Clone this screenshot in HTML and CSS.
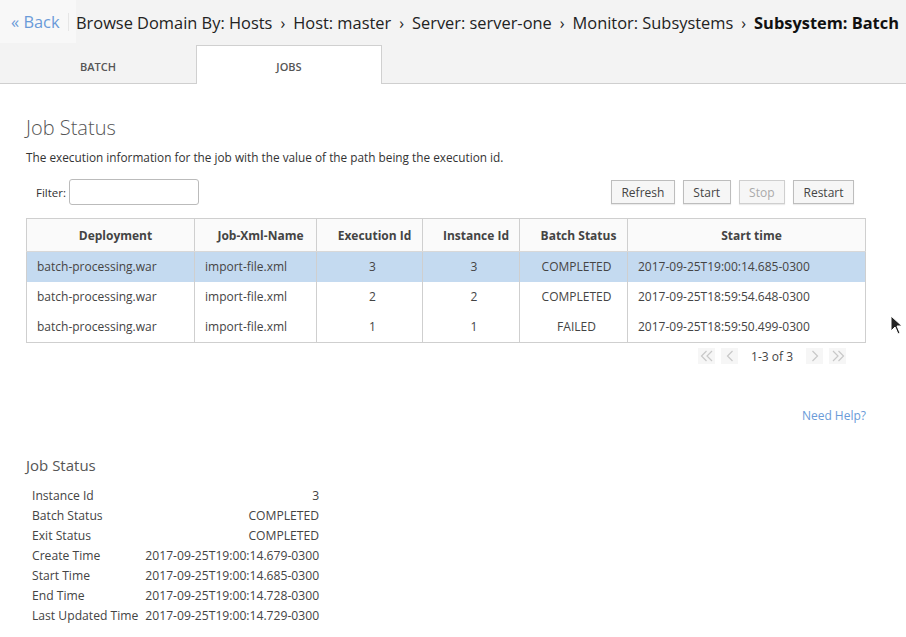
FILE: index.html
```html
<!DOCTYPE html>
<html>
<head>
<meta charset="utf-8">
<link rel="stylesheet" href="styles.css">
</head>
<body>
<div class="topbar">
  <div class="crumbs">
    <div class="back-box"><a class="back">« Back</a></div>
    <span class="crumb">Browse Domain By: Hosts</span>
    <span class="sep">›</span>
    <span class="crumb">Host: master</span>
    <span class="sep">›</span>
    <span class="crumb">Server: server-one</span>
    <span class="sep">›</span>
    <span class="crumb">Monitor: Subsystems</span>
    <span class="sep">›</span>
    <span class="crumb strong">Subsystem: Batch</span>
  </div>
  <div class="tabs">
    <div class="tab">BATCH</div>
    <div class="tab active">JOBS</div>
  </div>
</div>
<div class="content">
  <h1 class="title">Job Status</h1>
  <p class="desc">The execution information for the job with the value of the path being the execution id.</p>
  <div class="toolbar">
    <label class="filter">Filter: <input type="text" class="filter-input"></label>
    <div class="buttons">
      <button class="btn">Refresh</button>
      <button class="btn">Start</button>
      <button class="btn disabled">Stop</button>
      <button class="btn">Restart</button>
    </div>
  </div>
  <table class="grid">
    <thead>
      <tr>
        <th class="c1">Deployment</th>
        <th class="c2">Job-Xml-Name</th>
        <th class="c3">Execution Id</th>
        <th class="c4">Instance Id</th>
        <th class="c5">Batch Status</th>
        <th class="c6">Start time</th>
      </tr>
    </thead>
    <tbody>
      <tr class="selected">
        <td>batch-processing.war</td><td>import-file.xml</td><td class="ctr">3</td><td class="ctr">3</td><td class="ctr">COMPLETED</td><td>2017-09-25T19:00:14.685-0300</td>
      </tr>
      <tr>
        <td>batch-processing.war</td><td>import-file.xml</td><td class="ctr">2</td><td class="ctr">2</td><td class="ctr">COMPLETED</td><td>2017-09-25T18:59:54.648-0300</td>
      </tr>
      <tr>
        <td>batch-processing.war</td><td>import-file.xml</td><td class="ctr">1</td><td class="ctr">1</td><td class="ctr">FAILED</td><td>2017-09-25T18:59:50.499-0300</td>
      </tr>
    </tbody>
  </table>
  <div class="pager">
    <span class="pg"><svg width="14" height="14" viewBox="0 0 14 14"><path d="M6.5 2 L1.5 7 L6.5 12 M12 2 L7 7 L12 12" fill="none" stroke="#c8c8c8" stroke-width="1.2"/></svg></span>
    <span class="pg"><svg width="14" height="14" viewBox="0 0 14 14"><path d="M9.5 2 L4.5 7 L9.5 12" fill="none" stroke="#c8c8c8" stroke-width="1.2"/></svg></span>
    <span class="pg-text">1-3 of 3</span>
    <span class="pg"><svg width="14" height="14" viewBox="0 0 14 14"><path d="M4.5 2 L9.5 7 L4.5 12" fill="none" stroke="#c8c8c8" stroke-width="1.2"/></svg></span>
    <span class="pg"><svg width="14" height="14" viewBox="0 0 14 14"><path d="M2 2 L7 7 L2 12 M7.5 2 L12.5 7 L7.5 12" fill="none" stroke="#c8c8c8" stroke-width="1.2"/></svg></span>
  </div>
  <div class="help-row"><a class="help">Need Help?</a></div>
  <h2 class="subtitle">Job Status</h2>
  <table class="details">
    <tr><td>Instance Id</td><td class="val">3</td></tr>
    <tr><td>Batch Status</td><td class="val">COMPLETED</td></tr>
    <tr><td>Exit Status</td><td class="val">COMPLETED</td></tr>
    <tr><td>Create Time</td><td class="val">2017-09-25T19:00:14.679-0300</td></tr>
    <tr><td>Start Time</td><td class="val">2017-09-25T19:00:14.685-0300</td></tr>
    <tr><td>End Time</td><td class="val">2017-09-25T19:00:14.728-0300</td></tr>
    <tr><td>Last Updated Time</td><td class="val">2017-09-25T19:00:14.729-0300</td></tr>
  </table>
</div>
<svg class="cursor" width="14" height="22" viewBox="0 0 14 22"><path d="M1 1 L1 16 L5 12 L8 19 L10 18 L7 11 L12 11 Z" fill="#222" stroke="#fff" stroke-width="1"/></svg>
</body>
</html>
```
FILE: styles.css
```css
* { box-sizing: border-box; }
html, body { margin: 0; padding: 0; background: #fff; }
body {
  font-family: "Open Sans", "Liberation Sans", sans-serif;
  color: #333;
  width: 906px;
  height: 637px;
  overflow: hidden;
  position: relative;
}
.topbar {
  background: #f3f3f3;
  border-bottom: 1px solid #cfcfcf;
}
.crumbs {
  display: flex;
  align-items: center;
  height: 45px;
  font-size: 16.4px;
  color: #222;
  white-space: nowrap;
}
.back-box {
  align-self: flex-start;
  width: 76px;
  height: 43px;
  background: #f8f8f8;
  display: flex;
  align-items: center;
  padding-left: 11px;
}
.back {
  color: #6a9bd8;
  padding-right: 8px;
  border-right: 1px solid #e6e6e6;
  line-height: 16px;
  padding-top: 1px;
  padding-bottom: 1px;
}
.sep { padding: 0 8px; font-size: 16px; }
.strong { font-weight: 700; color: #111; }
.tabs {
  display: flex;
  height: 38px;
}
.tab {
  width: 196px;
  display: flex;
  align-items: center;
  justify-content: center;
  font-size: 11px;
  font-weight: 600;
  color: #555;
  padding-top: 4px;
}
.tab.active {
  width: 186px;
  background: #fff;
  border: 1px solid #d0d0d0;
  border-bottom: none;
  margin-bottom: -1px;
  height: 39px;
  padding-top: 3px;
}
.content {
  padding: 0 40px 0 26px;
}
.title {
  margin: 31px 0 0 0;
  font-size: 20px;
  font-weight: 300;
  color: #555;
  line-height: 26px;
}
.desc {
  margin: 8px 0 0 0;
  font-size: 11.8px;
  color: #333;
  line-height: 16px;
}
.toolbar {
  display: flex;
  justify-content: space-between;
  align-items: center;
  margin-top: 14px;
  padding-left: 10px;
  padding-right: 12px;
}
.filter {
  font-size: 11.5px;
  color: #333;
  display: flex;
  align-items: center;
  gap: 3px;
}
.filter-input {
  width: 130px;
  height: 26px;
  border: 1px solid #bbb;
  border-radius: 3px;
  margin: 0;
}
.buttons { display: flex; gap: 8px; }
.btn {
  font-family: inherit;
  font-size: 12px;
  color: #444;
  background: #f6f6f6;
  border: 1px solid #bdbdbd;
  box-shadow: 0 1px 1px rgba(0,0,0,0.08);
  height: 24px;
  padding: 0 9.5px;
  border-radius: 0;
}
.btn.disabled { color: #aaa; border-color: #cfcfcf; }
.grid {
  margin-top: 13px;
  width: 840px;
  border-collapse: collapse;
  border: 1px solid #cfcfcf;
  font-size: 12px;
  color: #444;
}
.grid th {
  height: 33px;
  font-weight: 700;
  color: #444;
  background: #fafafa;
  border: 1px solid #cfcfcf;
  border-bottom: 1px solid #d8d8d8;
  padding: 0 0 0 10px;
}
.grid td {
  height: 30px;
  padding: 0 10px;
  border-left: 1px solid #cfcfcf;
  border-right: 1px solid #cfcfcf;
  background: #fff;
}
.grid tbody tr:last-child td { height: 31px; }
.grid td.ctr { text-align: center; padding: 0 8px 0 14px; }
.grid tr.selected td { background: #c4daf0; }
.c1 { width: 168px; }
.c2 { width: 122px; }
.c3 { width: 106px; }
.c4 { width: 97px; }
.c5 { width: 108px; }
.pager {
  display: flex;
  justify-content: flex-end;
  align-items: center;
  width: 840px;
  padding-right: 17px;
  margin-top: 3px;
  font-size: 12px;
  color: #444;
  height: 20px;
}
.pg {
  width: 17px;
  height: 16px;
  background: #f6f6f6;
  display: flex;
  align-items: center;
  justify-content: center;
  margin: 0 3px;
}
.pg-text { margin: 0 10px 0 10px; }
.help-row {
  width: 840px;
  text-align: right;
  margin-top: 37px;
}
.help {
  font-size: 12px;
  color: #6a9bd8;
}
.subtitle {
  margin: 30px 0 0 0;
  font-size: 15px;
  font-weight: 400;
  color: #555;
  line-height: 20px;
}
.details {
  margin-top: 10px;
  margin-left: 4px;
  border-collapse: collapse;
  font-size: 12.15px;
  color: #444;
}
.details td { height: 20px; padding: 0 2px; }
.details td.val { text-align: right; padding-left: 5px; padding-right: 0; }
.cursor {
  position: absolute;
  left: 890px;
  top: 315px;
}
```
